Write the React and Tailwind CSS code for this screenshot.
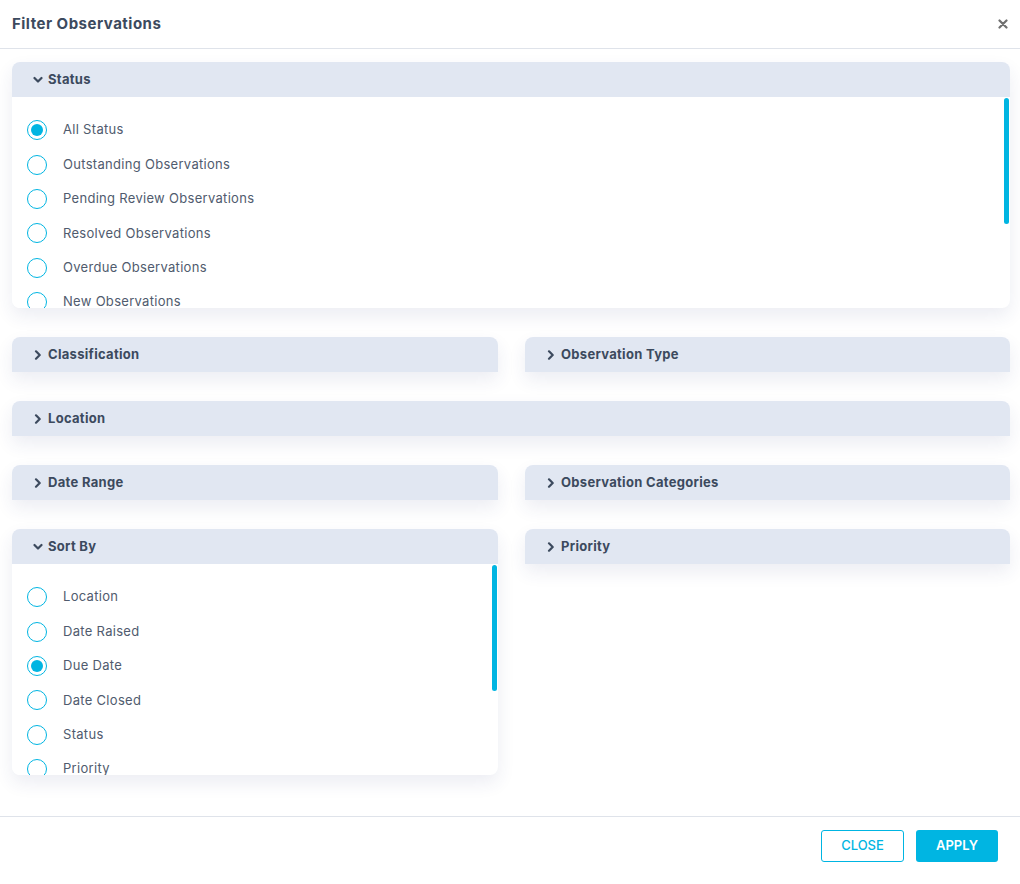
import React from 'react';

const font = { fontFamily: 'Inter, "Noto Sans", sans-serif' };

const statusOptions = [
  'All Status',
  'Outstanding Observations',
  'Pending Review Observations',
  'Resolved Observations',
  'Overdue Observations',
  'New Observations',
];

const sortOptions = ['Location', 'Date Raised', 'Due Date', 'Date Closed', 'Status', 'Priority'];

const Chevron = ({ open }) => (
  <svg width="10" height="10" viewBox="0 0 10 10" className="shrink-0">
    {open ? (
      <path d="M1.5 3 L5 6.5 L8.5 3" fill="none" stroke="#3c4a5e" strokeWidth="2.2" strokeLinecap="round" strokeLinejoin="round" />
    ) : (
      <path d="M3 1.3 L6.7 5 L3 8.7" fill="none" stroke="#3c4a5e" strokeWidth="2.2" strokeLinecap="round" strokeLinejoin="round" />
    )}
  </svg>
);

const PanelHeader = ({ title, open }) => (
  <div className="h-[35px] bg-[#e1e7f2] rounded-t-lg flex items-center gap-[5px] pl-[21px]">
    <Chevron open={open} />
    <span className="text-[13px] font-bold tracking-[0.3px] text-[#3c4a5e]">{title}</span>
  </div>
);

const Radio = ({ checked }) => (
  <span className="w-[20px] h-[20px] rounded-full border-[1.5px] border-[#00b5e2] flex items-center justify-center shrink-0">
    {checked && <span className="w-[12px] h-[12px] rounded-full bg-[#00b5e2]" />}
  </span>
);

const OpenPanel = ({ title, options, selected }) => (
  <div className="shadow-[0_8px_18px_rgba(40,60,120,0.09)] rounded-lg">
    <PanelHeader title={title} open />
    <div className="h-[211px] flex">
      <div className="flex-1 bg-white rounded-bl-lg overflow-hidden pt-[16px] pl-[15px]">
        {options.map((o) => (
          <div key={o} className="h-[34.4px] flex items-center gap-[16px]">
            <Radio checked={o === selected} />
            <span className="text-[13px] tracking-[0.3px] text-[#505b6e]">{o}</span>
          </div>
        ))}
      </div>
      <div className="w-[7px] pl-px">
        <div className="w-[5px] h-[126px] mt-px rounded-full bg-[#00b5e2]" />
      </div>
    </div>
  </div>
);

const ClosedPanel = ({ title, className = '' }) => (
  <div className={`shadow-[0_8px_18px_rgba(40,60,120,0.09)] rounded-t-lg ${className}`}>
    <PanelHeader title={title} />
  </div>
);

export default function App() {
  return (
    <div className="w-[1020px] h-[884px] bg-white flex flex-col" style={font}>
      <div className="h-[49px] border-b border-[#dfe3ea] flex items-center justify-between pl-3 pr-[12px] shrink-0">
        <h1 className="text-[15px] font-bold tracking-[0.5px] text-[#3c4a5e]">Filter Observations</h1>
        <svg width="10" height="10" viewBox="0 0 10 10">
          <path d="M1.5 1.5 L8.5 8.5 M8.5 1.5 L1.5 8.5" stroke="#707070" strokeWidth="2.2" strokeLinecap="round" />
        </svg>
      </div>

      <div className="flex-1 pl-3 pr-[10px] pt-[13px]">
        <OpenPanel title="Status" options={statusOptions} selected="All Status" />
        <div className="grid grid-cols-[486px_1fr] gap-x-[27px] gap-y-[29px] mt-[29px] items-start">
          <ClosedPanel title="Classification" />
          <ClosedPanel title="Observation Type" />
          <ClosedPanel title="Location" className="col-span-2" />
          <ClosedPanel title="Date Range" />
          <ClosedPanel title="Observation Categories" />
          <OpenPanel title="Sort By" options={sortOptions} selected="Due Date" />
          <ClosedPanel title="Priority" />
        </div>
      </div>

      <div className="h-[68px] border-t border-[#dfe3ea] flex items-start justify-end gap-[12px] pt-[13px] pr-[22px] shrink-0">
        <button className="w-[83px] h-[32px] border border-[#00b5e2] rounded-[3px] text-[13px] font-medium text-[#00b5e2]">
          CLOSE
        </button>
        <button className="w-[82px] h-[32px] bg-[#00b5e2] rounded-[3px] text-[13px] font-semibold text-white">
          APPLY
        </button>
      </div>
    </div>
  );
}
